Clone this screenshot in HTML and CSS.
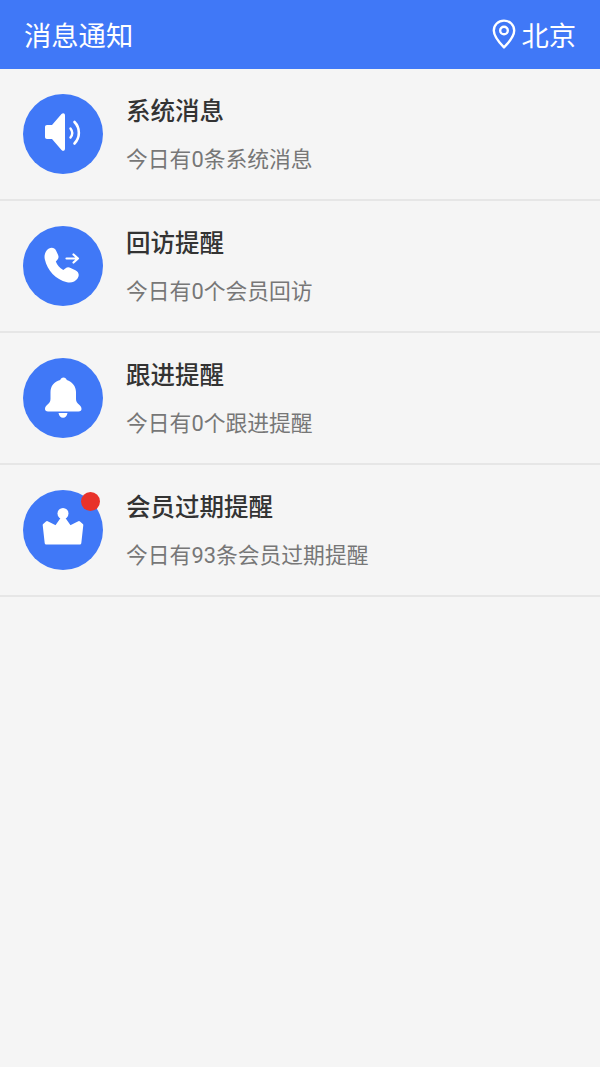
FILE: index.html
```html
<!DOCTYPE html>
<html lang="zh-CN">
<head>
  <meta charset="UTF-8">
  <title>消息通知</title>
  <link rel="stylesheet" href="styles.css">
</head>
<body>
  <header class="topbar">
    <span class="topbar-title">消息通知</span>
    <div class="city">
      <svg class="pin" viewBox="0 0 24 30" width="24" height="30">
        <path d="M12 1.600C6.200 1.600 1.800 6 1.800 11.600c0 6 5.800 12.400 10.200 16.800 4.400-4.400 10.200-10.800 10.200-16.800C22.200 6 17.800 1.600 12 1.600z" fill="none" stroke="#fff" stroke-width="2.400" stroke-linejoin="round"/>
        <circle cx="12" cy="11.500" r="3.800" fill="none" stroke="#fff" stroke-width="2.400"/>
      </svg>
      <span>北京</span>
    </div>
  </header>

  <main>
    <div class="msg-row">
      <div class="msg-icon">
        <svg viewBox="0 0 80 80" width="80" height="80">
          <path d="M24 31h5l9.500-11c1.500-1.500 3.500-1 3.500 1.500v33c0 2.500-2 3-3.500 1.500L29 45h-5c-1.200 0-2-.8-2-2V33c0-1.200.8-2 2-2z" fill="#fff"/>
          <path d="M47.500 34.500c2.200 2.800 2.200 6.200 0 9" fill="none" stroke="#fff" stroke-width="2.400" stroke-linecap="round"/>
          <path d="M51.500 28c5.800 6 5.800 15.500 0 21.500" fill="none" stroke="#fff" stroke-width="2.600" stroke-linecap="round"/>
        </svg>
      </div>
      <div class="msg-text">
        <h3>系统消息</h3>
        <p>今日有0条系统消息</p>
      </div>
    </div>

    <div class="msg-row">
      <div class="msg-icon">
        <svg viewBox="0 0 80 80" width="80" height="80">
          <path d="M25.500 22.800c3-1.800 6.200-1 7.500 1.700l2 4.200c1 2.200.6 3.800-.8 5.300l-1.400 1.500c1.400 3.600 3.600 6.200 7.500 8.600l2-1.600c1.600-1.300 3.400-1.500 5.300-.6l4.800 2.400c3.500 1.700 4.200 5.200 2.300 8-2.300 3.500-6.500 5-10.700 4-11.500-2.800-19.500-11.500-22.200-23-1-4.500 .8-8.500 3.700-10.500z" fill="#fff"/>
          <path d="M43.500 32.500h11.500M50.500 28.500l4.500 4-4.500 4" fill="none" stroke="#fff" stroke-width="2.200" stroke-linecap="round" stroke-linejoin="round"/>
        </svg>
      </div>
      <div class="msg-text">
        <h3>回访提醒</h3>
        <p>今日有0个会员回访</p>
      </div>
    </div>

    <div class="msg-row">
      <div class="msg-icon">
        <svg viewBox="0 0 80 80" width="80" height="80">
          <path d="M40.500 19.500c1.600 0 2.800 1 3.300 2.500 5.200 1.600 9.200 6.200 9.200 12v7c0 2.500 1.200 4 3.200 5.800 1.500 1.300 2.300 2.700 2.300 4.200 0 1.500-1 2.500-3 2.500H25c-2 0-3-1-3-2.500 0-1.500.8-2.900 2.300-4.200 2-1.800 3.200-3.300 3.200-5.800v-7c0-5.800 3.500-10.400 9.700-12 .5-1.500 1.700-2.500 3.300-2.500z" fill="#fff"/>
          <path d="M35.500 55h9c-.5 3-2.200 4.800-4.500 4.800S36 58 35.500 55z" fill="#fff"/>
        </svg>
      </div>
      <div class="msg-text">
        <h3>跟进提醒</h3>
        <p>今日有0个跟进提醒</p>
      </div>
    </div>

    <div class="msg-row">
      <div class="msg-icon">
        <svg viewBox="0 0 80 80" width="80" height="80">
          <circle cx="40" cy="23.500" r="5.500" fill="#fff"/>
          <path d="M40 27L47 37 56 32.500 58.800 35 56.800 53H23.200L21.200 35 24 32.500 33 37z" fill="#fff" stroke="#fff" stroke-width="3" stroke-linejoin="round"/>
        </svg>
        <span class="dot"></span>
      </div>
      <div class="msg-text">
        <h3>会员过期提醒</h3>
        <p>今日有93条会员过期提醒</p>
      </div>
    </div>
  </main>
</body>
</html>
```

FILE: styles.css
```css
body {
  margin: 0;
  padding: 0;
  min-height: 1067px;
  background-color: #f5f5f5;
  font-family: "Roboto", "Noto Sans CJK SC", sans-serif;
}

.topbar {
  box-sizing: border-box;
  display: flex;
  align-items: center;
  justify-content: space-between;
  height: 69px;
  padding: 0 24px 2px;
  background-color: #4078f7;
  color: white;
  font-size: 27.300px;
}

.city {
  display: flex;
  align-items: center;
  gap: 5px;
}

.pin {
  display: block;
}

.msg-row {
  display: flex;
  height: 130px;
  padding-left: 23px;
  border-bottom: 2px solid #e6e6e6;
}

.msg-icon {
  position: relative;
  flex: none;
  width: 80px;
  height: 80px;
  margin-top: 25px;
  border-radius: 100%;
  background-color: #4078f7;
}

.msg-icon svg {
  display: block;
}

.dot {
  position: absolute;
  top: 2px;
  right: 3px;
  width: 19px;
  height: 19px;
  border-radius: 100%;
  background-color: #e8322a;
}

.msg-text {
  margin-left: 23px;
}

.msg-text h3 {
  margin: 26px 0 0;
  font-size: 24.500px;
  font-weight: 500;
  line-height: 34px;
  color: #333;
}

.msg-text p {
  margin: 15px 0 0;
  font-size: 21.800px;
  line-height: 32px;
  color: #777;
}
```
